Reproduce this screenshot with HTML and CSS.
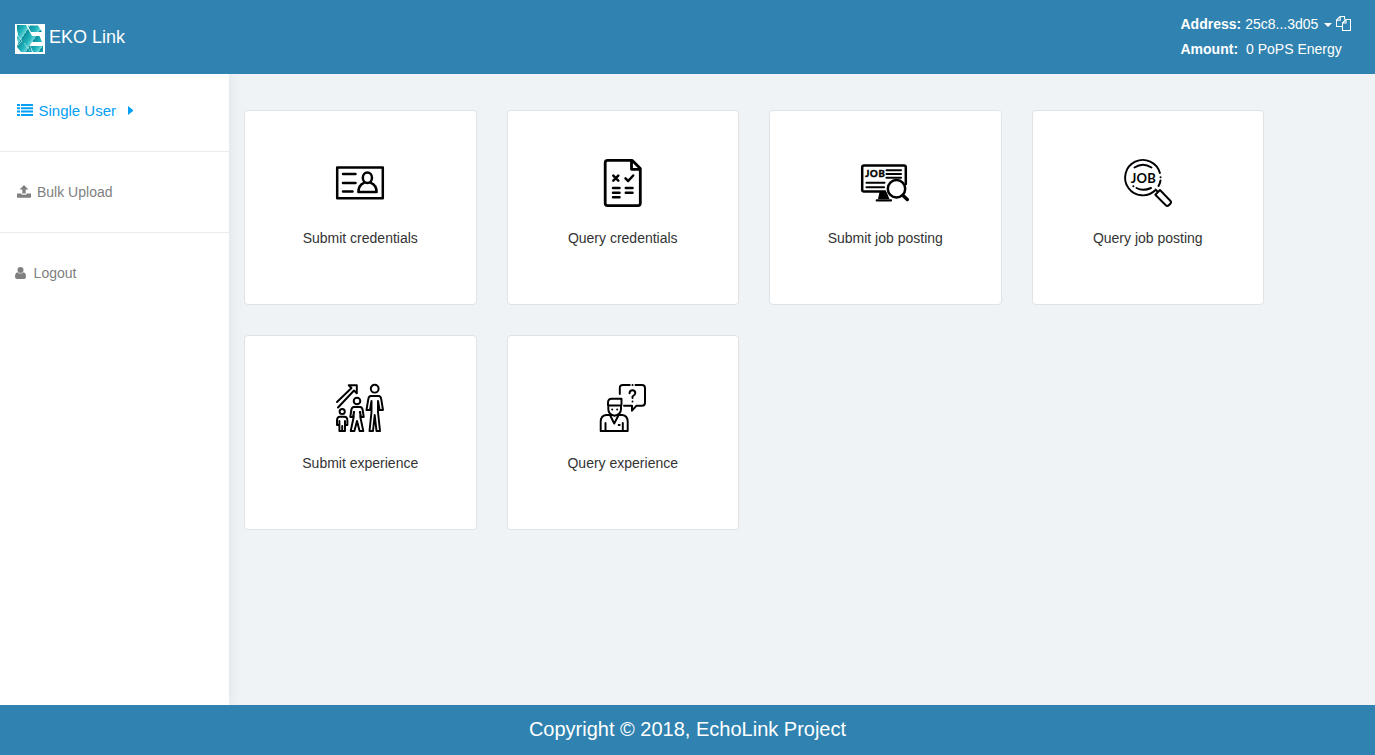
FILE: index.html
```html
<!DOCTYPE html>
<html lang="en">
<head>
<meta charset="utf-8">
<title>EKO Link</title>
<link rel="stylesheet" href="styles.css">
</head>
<body>
<header class="topbar">
  <a class="brand">
    <svg class="logo" viewBox="0 0 30 30">
      <defs><linearGradient id="teal" x1="2" y1="2" x2="11" y2="8" gradientUnits="userSpaceOnUse" spreadMethod="repeat"><stop offset="0" stop-color="#0d8f9d"/><stop offset=".6" stop-color="#20b4bd"/><stop offset="1" stop-color="#6fd5d9"/></linearGradient></defs>
      <path fill="#fff" d="M0 0h30v30H0z"/>
      <path fill="url(#teal)" d="M2 1h9l6 11v6l-2 3 2 7H6l-4-5 1-4-1-5 1-4-1-4z"/>
      <path fill="url(#teal)" d="M12.500 1.500H23l4 6.500H16zM17 12h7.500l2.500 6H17zM15.500 22H28v6H18z"/>
      <path fill="none" stroke="#d9f5f5" stroke-width=".6" d="M2 10l5 7-4 4M9 19l6 8"/>
    </svg>
    <span>EKO Link</span>
  </a>
  <div class="account">
    <div class="row"><b>Address:</b><span class="hash">25c8...3d05</span><i class="caret"></i>
      <svg class="copy" viewBox="0 0 15 15"><path d="M8.500 3.500v-3H4L.5 4v6.500H6M.5 4.200h3.700V.5M10 3.500L6.500 7v7.500h8v-11zM10 3.500V7H6.500"/></svg>
    </div>
    <div class="row"><b>Amount:</b><span class="amount">0 PoPS Energy</span></div>
  </div>
</header>
<div class="main">
  <nav class="side">
    <a class="item active">
      <svg class="list" viewBox="0 0 16 12"><path d="M0 0h3v2H0zM4 0h12v2H4zM0 3.300h3v2H0zM4 3.300h12v2H4zM0 6.600h3v2H0zM4 6.600h12v2H4zM0 10h3v2H0zM4 10h12v2H4z"/></svg>
      <span>Single User</span><i class="arrow"></i>
    </a>
    <a class="item upload-item">
      <svg class="upload" viewBox="0 0 14 13"><path d="M7 0l4.500 4.500H8.700v4H5.300v-4H2.500zM0 8.500h4.200q.3 1.300 1.500 1.300h2.600q1.200 0 1.500-1.300H14V12q0 .7-.7.7H.7Q0 12.700 0 12z"/></svg>
      <span>Bulk Upload</span>
    </a>
    <a class="item logout-item">
      <svg class="person" viewBox="0 0 11 12"><circle cx="5.500" cy="3" r="3"/><path d="M2.600 5.200a4 4 0 0 0 5.800 0Q11 5.500 11 9.700 11 12 9 12H2Q0 12 0 9.700 0 5.500 2.600 5.200z"/></svg>
      <span>Logout</span>
    </a>
  </nav>
  <main class="cards">
    <a class="card">
      <svg class="icon" viewBox="0 0 48 48"><path d="M1.200 8.500h45.600v30.700H1.200zM7 15h12.500M7 24h12.500M7 32.500h9.500"/><ellipse cx="31.400" cy="18.700" rx="4.600" ry="5.200"/><path d="M28 23.800q-5.500 2.200-5.600 9.200h18.200q-.1-7-5.800-9.200"/></svg>
      <span>Submit credentials</span>
    </a>
    <a class="card">
      <svg class="icon" viewBox="0 0 48 48"><path class="page" d="M8.800 1.400h24.500l8 8v34.900q0 2.300-2.300 2.300H8.500q-2.300 0-2.300-2.300V3.700q0-2.300 2.600-2.300zM32.500 2v8.300h8.500"/><path d="M14.300 16.700l5 5M19.300 16.700l-5 5M26.500 19.300l2.700 2.700 5-5.500M14 29h6.500M14 33.700h6.500M14 38.200h6.500M26.800 29h6.700M26.800 33.700h6.700"/></svg>
      <span>Query credentials</span>
    </a>
    <a class="card">
      <svg class="icon" viewBox="0 0 48 48"><path d="M24 32.500H3q-1.800 0-1.800-1.800V8.300q0-1.800 1.800-1.800h40q1.800 0 1.800 1.800V25"/><path class="lines" d="M25.500 11.300H40M25.500 15H40M25.500 18.700H40M5.500 23.700h18M5.500 28.200H23M15.700 41.400H30"/><path class="solid" d="M18.500 33h7l3 7H17z"/><circle cx="35.500" cy="29.800" r="8.700"/><path class="thick" d="M42 36.500l4.300 4"/><text class="job small" x="4.300" y="18.300" textLength="19.500">JOB</text></svg>
      <span>Submit job posting</span>
    </a>
    <a class="card">
      <svg class="icon fine" viewBox="0 0 48 48"><path d="M35.900 14A17.700 17.700 0 1 0 31.500 31M36.500 21.500q-.5 3-2 5.500M10.500 8.500q8.500-5.500 17 0M12.500 29q6.500 3.600 14.500 0M9.300 27.200h.1M36.500 18.200h.1M31.500 30.500l2.500 2.500M36 31l-4.700 4.700 10.500 10.500q1.500 1.500 3 0l1.500-1.500q1.500-1.500 0-3z"/><text class="job" x="6.700" y="23.500" textLength="25">JOB</text></svg>
      <span>Query job posting</span>
    </a>
    <a class="card">
      <svg class="icon fine" viewBox="0 0 48 48"><path d="M1 18L15.500 4l-2.800-2.800h8.100v8L18 6.500 2 23.500"/><circle cx="6.200" cy="27.500" r="2.600"/><circle cx="21" cy="17" r="3.300"/><circle cx="38.700" cy="4.700" r="3.900"/><path d="M3.400 47v-6H1v-4.500q0-3.800 3-3.800h4.400q3 0 3 3.800V41H9v6H3.400zM6.200 42v5M3.400 37v4M9 37v4M18 23h6q2.200 0 2.700 3l1 7h-2.500L23.800 28M18 23q-2.200 0-2.700 3l-1 7h2.500l1.400-5M17.700 28v5l-3 14h3.700L21 37l2.600 10h3.700l-3-14v-5M35 12h7.500q2.300 0 2.700 3l1.800 11h-3.400L42 17v11l2 19h-3.500L38.700 31 37 47h-3.500l2-19V17L34 26h-3.500L32.300 15q.4-3 2.700-3z"/></svg>
      <span>Submit experience</span>
    </a>
    <a class="card">
      <svg class="icon fine" viewBox="0 0 48 48"><path d="M20.800 10V4q0-3 3-3h7M33.500 1h.1M36.500 1H43q3 0 3 3v14.700q0 3-3 3h-5.500l-4.500 5v-5h-8M30.500 9.300q.2-3 3-3t2.800 3q0 1.600-2.800 3.200v1.600M33.500 17.500v.1M9 21.500v-3q0-3.800 3.700-3.800h9.800v6q0 .8-.8.800zM9.300 21.500V25q0 5.500 6.200 6.700 6.500-1.200 6.500-6.700v-3.500M13.200 25.500v.1M18.200 25.500v.1M11 31H7.200q-5.500.5-5.500 7V47h27v-9q0-6.500-5.500-7h-3.500l-4.500 8.500zM6.500 39v8M23.800 39v8M19.700 41h1"/></svg>
      <span>Query experience</span>
    </a>
  </main>
</div>
<footer class="footer">Copyright © 2018, EchoLink Project</footer>
</body>
</html>
```
FILE: styles.css
```css
* { box-sizing: border-box; }
body {
  margin: 0;
  height: 755px;
  display: flex;
  flex-direction: column;
  font: 14px/20px "Liberation Sans", Arial, sans-serif;
  color: #333;
  background: #eff3f6;
  overflow: hidden;
}
.topbar {
  height: 74px;
  flex: none;
  display: flex;
  justify-content: space-between;
  padding: 0 24px 0 15px;
  background: #3083b0;
  color: #fff;
}
.topbar, .footer { position: relative; }
.brand { display: flex; gap: 4px; padding-top: 24px; font-size: 18px; line-height: 26px; }
.logo { width: 30px; height: 30px; }
.account { width: 170.500px; padding-top: 12px; }
.row { display: flex; height: 25px; line-height: 25px; white-space: nowrap; }
.row b { margin-right: 4px; }
.row .amount { margin-left: 4px; }
.caret { margin: 11px 4px 0 6px; width: 8px; height: 4px; border: 4px solid transparent; border-top-color: #fff; border-bottom: 0; }
.copy { width: 15px; height: 15px; margin-top: 4px; fill: none; stroke: #fff; stroke-width: 1.1; flex: none; }
.main { flex: 1; display: flex; }
.side { width: 229px; background: #fff; box-shadow: 1px 0 14px rgba(0,0,0,.07); }
.item {
  display: flex;
  height: 81px;
  padding: 27px 17px 0;
  border-bottom: 1px solid #ebebeb;
  color: #808080;
}
.item svg { fill: currentColor; flex: none; }
.active { height: 78px; font-size: 15px; color: #03a0f5; }
.list { width: 16px; height: 12px; margin: 3px 5.500px 0 0; }
.arrow { margin: 5px 0 0 12px; height: 9px; border: 4.500px solid transparent; border-left: 5px solid #03a0f5; border-right: 0; }
.upload-item { padding-top: 30px; }
.upload { width: 14px; height: 13px; margin: 3px 6px 0 0; }
.logout-item { padding: 30px 15px 0; border: 0; }
.person { width: 11px; height: 12px; margin: 4px 7.600px 0 0; }
.main .item span { white-space: nowrap; }
.cards {
  display: grid;
  grid-template-columns: repeat(4, 232.500px);
  grid-auto-rows: 195px;
  gap: 30px;
  padding: 36px 0 0 15px;
  align-content: start;
}
.card {
  display: flex;
  flex-direction: column;
  align-items: center;
  gap: 21px;
  padding-top: 48px;
  background: #fff;
  border: 1px solid #e0e3e6;
  border-radius: 4px;
}
.icon { width: 48px; height: 48px; fill: none; stroke: #000; stroke-width: 2.500; stroke-linecap: round; stroke-linejoin: round; overflow: visible; }
.fine { stroke-width: 1.950; }
.page { stroke-width: 2.800; }
.lines { stroke-width: 2.100; }
.solid { fill: #000; stroke: none; }
.thick { stroke-width: 3.500; }
.job { font: bold 13px Lato, "Liberation Sans", sans-serif; fill: #000; stroke: none; }
.small { font-size: 9.500px; stroke: #000; stroke-width: .5; }
.footer { height: 50px; flex: none; background: #3083b0; color: #fff; font-size: 20px; line-height: 48px; text-align: center; }
```
